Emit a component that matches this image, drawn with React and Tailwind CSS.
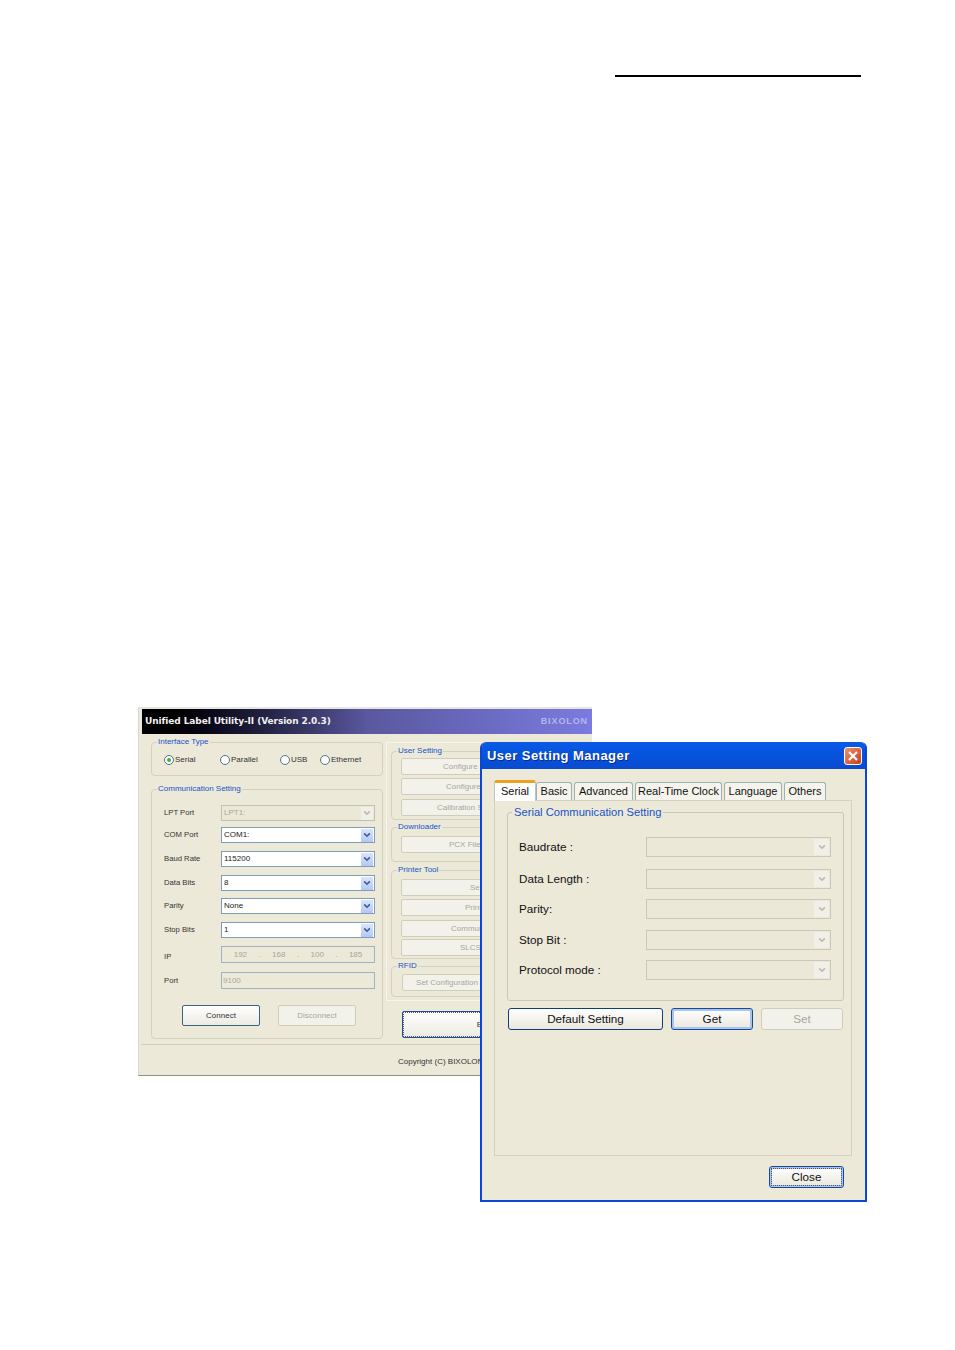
const font = { fontFamily: '"Liberation Sans", Arial, sans-serif' }

function Chevron({ disabled }) {
  return <svg viewBox="0 0 10 10" className="h-[8px] w-[8px]" fill="none" stroke={disabled ? '#b9b8ae' : '#3d5a9c'} strokeWidth="2"><path d="M1.5 3 L5 6.5 L8.5 3" /></svg>
}

function MiniSelect({ value, disabled }) {
  return <div className={`flex h-[16px] w-[154px] items-center border pl-[2px] text-[8px] ${disabled ? 'border-[#c2c0b0] bg-[#ebe8d8] text-[#a8a79c]' : 'border-[#7f9db9] bg-white text-[#222]'}`}>
    <span className="flex-1">{value}</span>
    <span className={`mr-px flex h-[13px] w-[12px] items-center justify-center ${disabled ? 'bg-[#f1f0e8]' : 'bg-gradient-to-b from-[#dbe5fb] to-[#b4c8f6]'}`}><Chevron disabled={disabled} /></span>
  </div>
}

function MiniButton({ children, className = '' }) {
  return <div className={`flex h-[17px] items-center whitespace-nowrap rounded-[2px] border border-[#d0ceba] bg-[#f3f2ea] text-[8px] text-[#a8a79c] ${className}`}>{children}</div>
}

function Group({ title, className = '', inner = 'pl-[9px]', children }) {
  return <fieldset className={`rounded-[4px] border border-[#d3d1bf] ${className}`}>
    <legend className="ml-[5px] h-[10px] px-px text-[8px] leading-[10px] text-[#1653c8]">{title}</legend>
    <div className={inner}>{children}</div>
  </fieldset>
}

const leftRows = [
  { label: 'LPT Port', value: 'LPT1:', disabled: true, mt: 'mt-[11px]' },
  { label: 'COM Port', value: 'COM1:', mt: 'mt-[6px]' },
  { label: 'Baud Rate', value: '115200', mt: 'mt-[8px]' },
  { label: 'Data Bits', value: '8', mt: 'mt-[8px]' },
  { label: 'Parity', value: 'None', mt: 'mt-[7px]' },
  { label: 'Stop Bits', value: '1', mt: 'mt-[8px]' },
]

function UtilityWindow() {
  return <div className="absolute left-[138px] top-[707px] flex h-[369px] w-[454px] flex-col border-b border-l border-t-2 border-b-[#8f8f88] border-l-[#d8d8d0] border-t-[#e6e6e0] bg-[#ece9d8] text-[#333]">
    <div className="ml-[3px] flex h-[25px] items-center justify-between bg-gradient-to-r from-black via-[#5a589f] to-[#7b7be0] pl-[3px] pr-[4px]">
      <span className="text-[9px] font-bold tracking-[-0.1px] text-[#f0f0f0]" style={{ fontFamily: '"DejaVu Sans", sans-serif' }}>Unified Label Utility-II (Version 2.0.3)</span>
      <span className="text-[9px] font-bold tracking-[0.9px] text-[#b5b5ee]">BIXOLON</span>
    </div>
    <div className="flex flex-1 pl-[12px] pt-[3px]">
      <div className="w-[232px]">
        <Group title="Interface Type" className="h-[39px]" inner="pl-[12px]">
          <div className="mt-[7px] flex text-[8px]">
            {[['Serial', true, 'w-[56px]'], ['Parallel', false, 'w-[60px]'], ['USB', false, 'w-[40px]'], ['Ethernet', false, 'w-[60px]']].map(([name, on, width]) => <div key={name} className={`flex items-center gap-px ${width}`}>
              <span className="flex h-[10px] w-[10px] items-center justify-center rounded-full border border-[#54708e] bg-white">{on && <span className="h-[4px] w-[4px] rounded-full bg-[#3fae3f]" />}</span>
              <span>{name}</span>
            </div>)}
          </div>
        </Group>
        <Group title="Communication Setting" className="mt-[8px] h-[255px]" inner="pl-[12px]">
          {leftRows.map((row) => <div key={row.label} className={`flex items-center ${row.mt}`}>
            <span className="w-[57px] text-[7.7px]">{row.label}</span>
            <MiniSelect value={row.value} disabled={row.disabled} />
          </div>)}
          <div className="mt-[8px] flex items-center">
            <span className="w-[57px] pt-[4px] text-[7.7px]">IP</span>
            <div className="flex h-[17px] w-[154px] items-center justify-around border border-[#9fb2c4] px-[6px] text-[8px] text-[#a8a79c]">
              <span>192</span><span>.</span><span>168</span><span>.</span><span>100</span><span>.</span><span>185</span>
            </div>
          </div>
          <div className="mt-[9px] flex items-center">
            <span className="w-[57px] text-[7.7px]">Port</span>
            <div className="flex h-[17px] w-[154px] items-center border border-[#9fb2c4] pl-px text-[8px] text-[#a8a79c]">9100</div>
          </div>
          <div className="ml-[18px] mt-[16px] flex gap-[18px] text-[8px]">
            <div className="flex h-[21px] w-[78px] items-center justify-center rounded-[2px] border border-[#3b6484] bg-gradient-to-b from-white to-[#ecebe2]">Connect</div>
            <MiniButton className="!h-[21px] w-[78px] justify-center">Disconnect</MiniButton>
          </div>
        </Group>
      </div>
      <div className="ml-[3px] flex-1">
        <div className="mt-[5px] h-[259px] border border-r-0 border-[#f6f5ec] pl-[4px] pr-[8px] pt-[3px]">
          <Group title="User Setting" className="h-[74px]">
            <MiniButton className="mt-[2px] w-[163px] pl-[41px]">Configure P</MiniButton>
            <MiniButton className="mt-[3px] w-[163px] pl-[44px]">Configure</MiniButton>
            <MiniButton className="mt-[4px] w-[163px] pl-[35px]">Calibration S</MiniButton>
          </Group>
          <Group title="Downloader" className="mt-[2px] h-[40px]">
            <MiniButton className="mt-[4px] w-[163px] pl-[47px]">PCX File</MiniButton>
          </Group>
          <Group title="Printer Tool" className="mt-[3px] h-[94px]">
            <MiniButton className="mt-[4px] w-[163px] pl-[68px]">Se</MiniButton>
            <MiniButton className="mt-[3px] w-[163px] pl-[63px]">Print</MiniButton>
            <MiniButton className="mt-[4px] w-[163px] pl-[49px]">Commun</MiniButton>
            <MiniButton className="mt-[2px] w-[163px] pl-[58px]">SLCS</MiniButton>
          </Group>
          <Group title="RFID" className="mt-[2px] h-[36px]" inner="pl-[10px]">
            <MiniButton className="mt-[3px] w-[90px] justify-center">Set Configuration</MiniButton>
          </Group>
        </div>
        <div className="ml-[16px] mt-[10px] flex h-[27px] w-[163px] items-center justify-center rounded-[2px] border border-[#1d4f9c] bg-gradient-to-b from-white to-[#ecebe2] text-[8px] outline-1 -outline-offset-2 outline-dotted outline-[#556]">Exit</div>
      </div>
    </div>
    <div className="ml-[2px] flex h-[31px] items-center border-t border-[#cfcdbd] pl-[257px] pt-[3px] text-[8px]">Copyright (C) BIXOLON</div>
  </div>
}

function DialogSelect() {
  return <div className="flex h-[20px] w-[185px] items-center justify-end border border-[#c9c7b8] bg-[#ebe8d8] pr-px">
    <span className="flex h-[16px] w-[15px] items-center justify-center bg-[#f1f0e8]"><Chevron disabled /></span>
  </div>
}

function DialogButton({ children, className = '' }) {
  return <div className={`flex h-[22px] items-center justify-center rounded-[3px] border border-[#0f3f78] bg-gradient-to-b from-white to-[#e9e7dc] text-[11.7px] text-[#111] ${className}`}>{children}</div>
}

const tabs = [
  { name: 'Basic', width: 'w-[36px]' },
  { name: 'Advanced', width: 'w-[59px]' },
  { name: 'Real-Time Clock', width: 'w-[87px]' },
  { name: 'Language', width: 'w-[58px]' },
  { name: 'Others', width: 'w-[42px]' },
]

const dialogRows = [
  { label: 'Baudrate :', mt: 'mt-[18px]' },
  { label: 'Data Length :', mt: 'mt-[12px]' },
  { label: 'Parity:', mt: 'mt-[10px]' },
  { label: 'Stop Bit :', mt: 'mt-[11px]' },
  { label: 'Protocol mode :', mt: 'mt-[10px]' },
]

function SettingDialog() {
  return <div className="absolute left-[480px] top-[742px] flex h-[460px] w-[387px] flex-col rounded-t-[6px] border-x-[2px] border-b-[2px] border-[#0a47d6] bg-[#ece9d8] text-[11.7px] text-[#111]">
    <div className="flex h-[27px] shrink-0 items-center justify-between rounded-t-[5px] bg-gradient-to-b from-[#0a5ae6] via-[#0553dc] to-[#0a4bd0] pl-[5px] pr-[3px]">
      <span className="pt-px text-[13px] font-bold tracking-[0.45px] text-white [text-shadow:1px_1px_#0a2a90]">User Setting Manager</span>
      <span className="flex h-[18px] w-[18px] items-center justify-center rounded-[3px] border border-white bg-gradient-to-br from-[#ec9070] to-[#c83a12]">
        <svg viewBox="0 0 12 12" className="h-[12px] w-[12px]" stroke="white" strokeWidth="2.2"><path d="M2 2 L10 10 M10 2 L2 10" /></svg>
      </span>
    </div>
    <div className="ml-[12px] mt-[11px] flex items-end text-[11px]">
      <div className="z-10 -mb-px flex h-[21px] w-[42px] items-center justify-center rounded-t-[3px] border-x border-t-[3px] border-x-[#b8c4c8] border-t-[#f0a020] bg-white pb-[2px]">Serial</div>
      <div className="flex gap-[2px]">
        {tabs.map((tab) => <div key={tab.name} className={`flex h-[18px] items-center justify-center whitespace-nowrap rounded-t-[3px] border-x border-t border-[#9fb0b5] bg-[#f5f4ec] ${tab.width}`}>{tab.name}</div>)}
      </div>
    </div>
    <div className="ml-[12px] h-[356px] w-[358px] border border-[#d4d1c0] pl-[12px] pt-[4px]">
      <fieldset className="h-[196px] w-[337px] rounded-[3px] border border-[#c9c7b6]">
        <legend className="ml-[4px] h-[14px] px-[2px] text-[11.2px] leading-[14px] text-[#1653c8]">Serial Communication Setting</legend>
        {dialogRows.map((row) => <div key={row.label} className={`flex items-center pl-[11px] ${row.mt}`}>
          <span className="w-[127px]">{row.label}</span>
          <DialogSelect />
        </div>)}
      </fieldset>
      <div className="ml-px mt-[7px] flex">
        <DialogButton className="w-[155px]">Default Setting</DialogButton>
        <DialogButton className="ml-[8px] w-[82px] !border-[#174a94] shadow-[inset_0_0_0_2px_#a9c4ee]">Get</DialogButton>
        <div className="ml-[8px] flex h-[22px] w-[82px] items-center justify-center rounded-[3px] border border-[#cfcdbd] bg-[#f3f2ea] text-[#a8a79c]">Set</div>
      </div>
    </div>
    <DialogButton className="ml-[287px] mt-[10px] w-[75px] !border-[#174a94] shadow-[inset_0_0_0_2px_#a9c4ee] outline-1 -outline-offset-3 outline-dotted outline-[#555]">Close</DialogButton>
  </div>
}

export default function App() {
  return <div className="relative h-[1350px] w-[955px] bg-white" style={font}>
    <div className="absolute left-[615px] top-[75px] h-[2px] w-[246px] bg-black" />
    <UtilityWindow />
    <SettingDialog />
  </div>
}
